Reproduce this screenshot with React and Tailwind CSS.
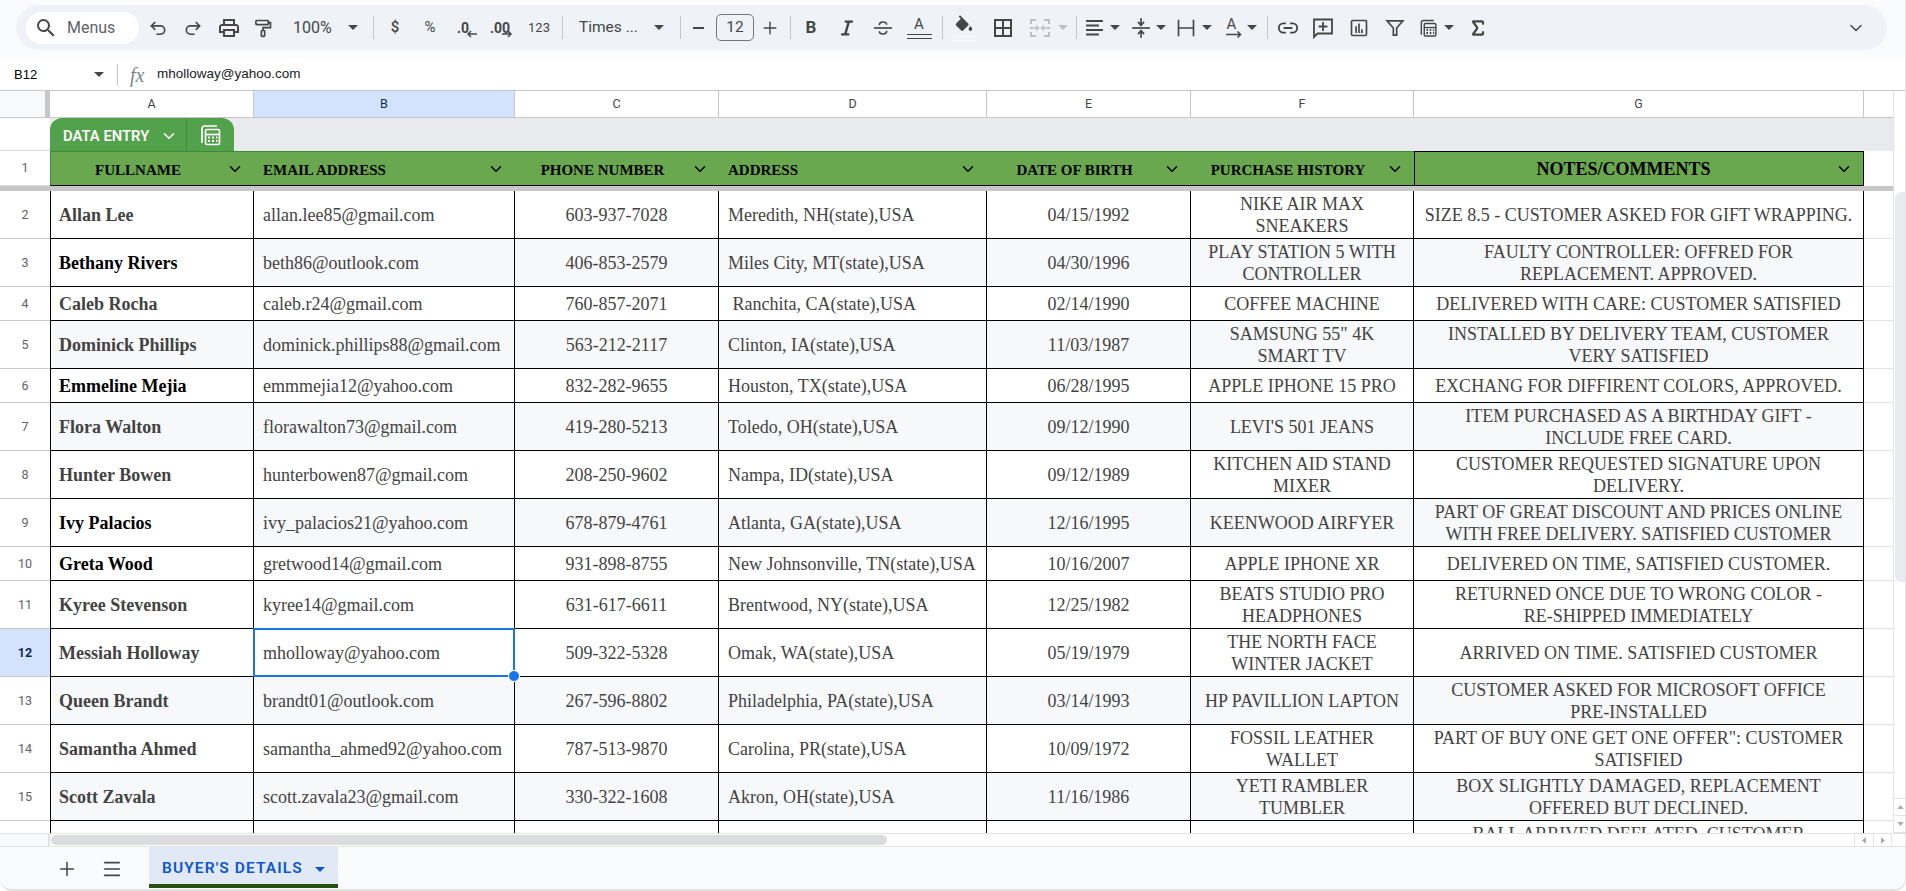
import React from "react";
import { Link2, Sigma, ChevronDown, Plus, Menu } from "lucide-react";

const D = "#444746";
const rows = [
  { n: 2, tall: 1, name: "Allan Lee", email: "allan.lee85@gmail.com", phone: "603-937-7028", addr: "Meredith, NH(state),USA", dob: "04/15/1992", item: "NIKE AIR MAX\nSNEAKERS", note: "SIZE 8.5 - CUSTOMER ASKED FOR GIFT WRAPPING." },
  { n: 3, tall: 1, dark: 1, shade: 1, whiteA: 1, name: "Bethany Rivers", email: "beth86@outlook.com", phone: "406-853-2579", addr: "Miles City, MT(state),USA", dob: "04/30/1996", item: "PLAY STATION 5 WITH\nCONTROLLER", note: "FAULTY CONTROLLER: OFFRED FOR\nREPLACEMENT. APPROVED." },
  { n: 4, name: "Caleb Rocha", email: "caleb.r24@gmail.com", phone: "760-857-2071", addr: " Ranchita, CA(state),USA", dob: "02/14/1990", item: "COFFEE MACHINE", note: "DELIVERED WITH CARE: CUSTOMER SATISFIED" },
  { n: 5, tall: 1, shade: 1, name: "Dominick Phillips", email: "dominick.phillips88@gmail.com", phone: "563-212-2117", addr: "Clinton, IA(state),USA", dob: "11/03/1987", item: "SAMSUNG 55\" 4K\nSMART TV", note: "INSTALLED BY DELIVERY TEAM, CUSTOMER\nVERY SATISFIED" },
  { n: 6, dark: 1, name: "Emmeline Mejia", email: "emmmejia12@yahoo.com", phone: "832-282-9655", addr: "Houston, TX(state),USA", dob: "06/28/1995", item: "APPLE IPHONE 15 PRO", note: "EXCHANG FOR DIFFIRENT COLORS, APPROVED." },
  { n: 7, tall: 1, shade: 1, name: "Flora Walton", email: "florawalton73@gmail.com", phone: "419-280-5213", addr: "Toledo, OH(state),USA", dob: "09/12/1990", item: "LEVI'S 501 JEANS", note: "ITEM PURCHASED AS A BIRTHDAY GIFT -\nINCLUDE FREE CARD." },
  { n: 8, tall: 1, name: "Hunter Bowen", email: "hunterbowen87@gmail.com", phone: "208-250-9602", addr: "Nampa, ID(state),USA", dob: "09/12/1989", item: "KITCHEN AID STAND\nMIXER", note: "CUSTOMER REQUESTED SIGNATURE UPON\nDELIVERY." },
  { n: 9, tall: 1, dark: 1, shade: 1, whiteA: 1, name: "Ivy Palacios", email: "ivy_palacios21@yahoo.com", phone: "678-879-4761", addr: "Atlanta, GA(state),USA", dob: "12/16/1995", item: "KEENWOOD AIRFYER", note: "PART OF GREAT DISCOUNT AND PRICES ONLINE\nWITH FREE DELIVERY. SATISFIED CUSTOMER" },
  { n: 10, dark: 1, name: "Greta Wood", email: "gretwood14@gmail.com", phone: "931-898-8755", addr: "New Johnsonville, TN(state),USA", dob: "10/16/2007", item: "APPLE IPHONE XR", note: "DELIVERED ON TIME, SATISFIED CUSTOMER." },
  { n: 11, tall: 1, name: "Kyree Stevenson", email: "kyree14@gmail.com", phone: "631-617-6611", addr: "Brentwood, NY(state),USA", dob: "12/25/1982", item: "BEATS STUDIO PRO\nHEADPHONES", note: "RETURNED ONCE DUE TO WRONG COLOR -\nRE-SHIPPED IMMEDIATELY" },
  { n: 12, tall: 1, sel: 1, name: "Messiah Holloway", email: "mholloway@yahoo.com", phone: "509-322-5328", addr: "Omak, WA(state),USA", dob: "05/19/1979", item: "THE NORTH FACE\nWINTER JACKET", note: "ARRIVED ON TIME. SATISFIED CUSTOMER" },
  { n: 13, tall: 1, shade: 1, name: "Queen Brandt", email: "brandt01@outlook.com", phone: "267-596-8802", addr: "Philadelphia, PA(state),USA", dob: "03/14/1993", item: "HP PAVILLION LAPTON", note: "CUSTOMER ASKED FOR MICROSOFT OFFICE\nPRE-INSTALLED" },
  { n: 14, tall: 1, name: "Samantha Ahmed", email: "samantha_ahmed92@yahoo.com", phone: "787-513-9870", addr: "Carolina, PR(state),USA", dob: "10/09/1972", item: "FOSSIL LEATHER\nWALLET", note: "PART OF BUY ONE GET ONE OFFER\": CUSTOMER\nSATISFIED" },
  { n: 15, tall: 1, shade: 1, name: "Scott Zavala", email: "scott.zavala23@gmail.com", phone: "330-322-1608", addr: "Akron, OH(state),USA", dob: "11/16/1986", item: "YETI RAMBLER\nTUMBLER", note: "BOX SLIGHTLY DAMAGED, REPLACEMENT\nOFFERED BUT DECLINED." },
  { n: 16, tall: 1, blankRow: 1, name: "", email: "", phone: "", addr: "", dob: "", item: "", note: "BALL ARRIVED DEFLATED, CUSTOMER\nREFUNDED" },
];

const Svg = ({ children, cls = "w-[24px] h-[24px]", color = D }) => (
  <svg viewBox="0 0 24 24" className={cls} fill="none" stroke={color} strokeWidth="2" strokeLinecap="square">{children}</svg>
);
const Caret = ({ color = D }) => (
  <svg viewBox="0 0 10 5" className="w-[10px] h-[5px]"><path d="M0 0h10L5 5z" fill={color} /></svg>
);
const Sep = ({ cls }) => (
  <div className={`flex h-full items-center justify-center ${cls}`}><div className="h-[23px] w-px bg-[#c7c7c7]" /></div>
);
const T = ({ cls, children }) => <div className={`flex h-full shrink-0 items-center justify-center ${cls}`}>{children}</div>;

const Calc = ({ color = D, cls = "h-[24px] w-[24px]" }) => (
  <svg viewBox="0 0 24 24" className={cls} fill="none" stroke={color} strokeWidth="1.7">
    <path d="M4 20V5.5A2.5 2.5 0 0 1 6.500 3H19" />
    <rect x="7.500" y="6.500" width="14" height="15" rx="1.500" />
    <path d="M7.500 11.500h14" />
    <path d="M10 14.500h2M14 14.500h2M18 14.500h1.500M10 18h2M14 18h2M18 18h1.500" strokeWidth="2.200" />
  </svg>
);

function Toolbar() {
  return (
    <div className="h-[59px] shrink-0 bg-[#f9fbfd] pt-[5px]">
      <div className="mx-[18px] ml-[16px] flex h-[45px] items-center rounded-[23px] bg-[#eff3f8] pl-[10px] text-[#444746] font-['Roboto',sans-serif]">
        <div className="flex h-[32px] w-[113px] shrink-0 items-center rounded-[16px] bg-white pl-[8px]">
          <svg viewBox="0 0 24 24" className="h-[24px] w-[24px]" fill={D}><path d="M15.500 14h-.79l-.28-.27A6.470 6.470 0 0 0 16 9.500 6.500 6.500 0 1 0 9.500 16c1.610 0 3.090-.59 4.230-1.570l.27.28v.79l5 4.990L20.490 19l-4.990-5zm-6 0C7.010 14 5 11.990 5 9.500S7.010 5 9.500 5 14 7.010 14 9.500 11.990 14 9.500 14z" /></svg>
          <span className="ml-[9px] text-[16px] text-[#5f6368]">Menus</span>
        </div>
        <T cls="w-[38px]">
          <Svg cls="h-[20px] w-[20px]"><path d="M8 13.500 4 9.500l4-4" strokeWidth="2" /><path d="M4.500 9.500H15a5 5 0 0 1 0 10h-4" strokeWidth="2" /></Svg>
        </T>
        <T cls="w-[32px]">
          <Svg cls="h-[20px] w-[20px]"><path d="M16 13.500l4-4-4-4" strokeWidth="2" /><path d="M19.500 9.500H9a5 5 0 0 0 0 10h4" strokeWidth="2" /></Svg>
        </T>
        <T cls="w-[40px]">
          <svg viewBox="0 0 24 24" className="h-[24px] w-[24px]" fill={D}><path d="M19 8h-1V3H6v5H5c-1.660 0-3 1.340-3 3v6h4v4h12v-4h4v-6c0-1.660-1.340-3-3-3zM8 5h8v3H8V5zm8 12v2H8v-4h8v2zm2-2v-2H6v2H4v-4c0-.55.45-1 1-1h14c.55 0 1 .45 1 1v4h-2z" /></svg>
        </T>
        <T cls="w-[28px]">
          <Svg cls="h-[22px] w-[20px]">
            <rect x="3.500" y="3" width="15" height="5" rx="1" />
            <path d="M18.500 5.500h2.500v6h-9v3" />
            <rect x="10" y="15" width="4" height="7" rx="1" />
          </Svg>
        </T>
        <div className="flex h-full w-[88px] shrink-0 items-center pl-[16px]">
          <span className="w-[55px] text-[16px]">100%</span><Caret />
        </div>
        <Sep cls="w-[16px]" />
        <T cls="w-[28px] text-[15px] font-medium">$</T>
        <T cls="w-[42px] text-[15px]">%</T>
        <T cls="w-[32px]">
          <div className="relative h-[24px] w-[20px]">
            <span className="text-[14px] font-bold leading-[18px]">.0</span>
            <svg viewBox="0 0 10 8" className="absolute bottom-[2px] right-0 h-[8px] w-[10px]" fill="none" stroke={D} strokeWidth="1.500"><path d="M10 4H1M4 1 1 4l3 3" /></svg>
          </div>
        </T>
        <T cls="w-[38px]">
          <div className="relative h-[24px] w-[24px]">
            <span className="text-[14px] font-bold leading-[18px]">.00</span>
            <svg viewBox="0 0 10 8" className="absolute bottom-[2px] right-[2px] h-[8px] w-[10px]" fill="none" stroke={D} strokeWidth="1.500"><path d="M0 4h9M6 1l3 3-3 3" /></svg>
          </div>
        </T>
        <T cls="w-[36px] text-[13px]">123</T>
        <Sep cls="w-[10px]" />
        <div className="flex h-full w-[105px] shrink-0 items-center pl-[12px]">
          <span className="w-[75px] text-[15.500px]">Times ...</span><Caret />
        </div>
        <Sep cls="w-[16px]" />
        <T cls="w-[20px]"><div className="h-[2px] w-[11px] bg-[#444746]" /></T>
        <div className="ml-[8px] flex h-[27px] w-[38px] shrink-0 items-center justify-center rounded-[5px] border border-[#747775] text-[15.500px]">12</div>
        <T cls="w-[32px]"><Plus size={20} color={D} strokeWidth={1.700} /></T>
        <Sep cls="w-[8px]" />
        <T cls="w-[34px] text-[17px] font-bold">B</T>
        <T cls="w-[38px]">
          <Svg cls="h-[22px] w-[22px]"><path d="M9.500 5h9M5.500 19h9M14 5l-4 14" strokeWidth="2.600" strokeLinecap="butt" /></Svg>
        </T>
        <T cls="w-[34px]">
          <Svg cls="h-[22px] w-[22px]"><path d="M3 12h18" strokeWidth="1.800" /><path d="M8 9c0-2 1.700-3.500 4-3.500s4 1.300 4 3M16 15c0 2-1.700 3.500-4 3.500s-4-1.300-4-3" strokeWidth="1.800" strokeLinecap="butt" /></Svg>
        </T>
        <T cls="w-[38px]">
          <div className="flex flex-col items-center">
            <span className="text-[15px] leading-[15px]">A</span>
            <div className="mt-[2px] h-[5px] w-[25px] border-y border-[#444746]" />
          </div>
        </T>
        <Sep cls="w-[8px]" />
        <T cls="w-[36px]">
          <div className="flex flex-col items-center">
            <svg viewBox="0 0 24 20" className="h-[19px] w-[22px]" fill={D}><path d="M16.560 8.940 7.620 0 6.210 1.410l2.380 2.380-5.150 5.150c-.59.59-.59 1.540 0 2.120l5.500 5.500c.29.29.68.44 1.060.44s.77-.15 1.060-.44l5.500-5.500c.59-.58.59-1.530 0-2.120zM19 11.500s-2 2.170-2 3.500c0 1.100.9 2 2 2s2-.9 2-2c0-1.330-2-3.500-2-3.500z" /></svg>
            <div className="mt-[2px] h-[5px] w-[26px] border-y border-white" />
          </div>
        </T>
        <T cls="w-[42px]">
          <Svg><rect x="4" y="4" width="16" height="16" /><path d="M12 4v16M4 12h16" /></Svg>
        </T>
        <T cls="w-[32px]">
          <svg viewBox="0 0 24 24" className="h-[24px] w-[24px]" fill="none" stroke="#bdc1c6" strokeWidth="2">
            <path d="M8 4H3v4M3 16v4h5M16 4h5v4M21 16v4h-5M3 11v2M21 11v2" />
            <path d="M4 12h6M8 9.500l2.500 2.500L8 14.500M20 12h-6M16 9.500 13.500 12l2.500 2.500" strokeWidth="1.500" />
          </svg>
        </T>
        <T cls="w-[14px]"><Caret color="#bdc1c6" /></T>
        <Sep cls="w-[12px]" />
        <T cls="w-[26px]">
          <Svg><path d="M4 5h15M4 9.500h11M4 14h15M4 18.500h11" strokeWidth="1.800" /></Svg>
        </T>
        <T cls="w-[14px]"><Caret /></T>
        <T cls="ml-[6px] w-[26px]">
          <Svg><path d="M4 12h16" strokeWidth="1.700" /><path d="M12 3v6M9.500 6.500 12 9.500l2.500-3M12 21v-6M9.500 17.500 12 14.500l2.500 3" strokeWidth="1.700" /></Svg>
        </T>
        <T cls="w-[14px]"><Caret /></T>
        <T cls="ml-[5px] w-[26px]">
          <Svg cls="h-[20px] w-[20px]"><path d="M3 3v18M21 3v18M3 12h18" strokeWidth="2" /></Svg>
        </T>
        <T cls="ml-[1px] w-[14px]"><Caret /></T>
        <T cls="ml-[6px] w-[26px]">
          <div className="flex flex-col items-start">
            <span className="ml-[2px] text-[15px] leading-[14px]">A</span>
            <svg viewBox="0 0 17 7" className="h-[7px] w-[17px]" fill="none" stroke={D} strokeWidth="1.500"><path d="M1 3.500h14M12.500 .5l3 3-3 3" /></svg>
          </div>
        </T>
        <T cls="w-[12px]"><Caret /></T>
        <Sep cls="w-[18px]" />
        <T cls="w-[24px]"><Link2 size={22} color={D} strokeWidth={2} /></T>
        <T cls="w-[46px]">
          <Svg><path d="M3 21V3.500h18V17.500H6.500z" strokeWidth="1.800" strokeLinejoin="miter" /><path d="M12 7v7M8.500 10.500h7" strokeWidth="1.800" /></Svg>
        </T>
        <T cls="w-[26px]">
          <Svg cls="h-[20px] w-[20px]"><rect x="3" y="3" width="18" height="18" rx="1.500" strokeWidth="2" /><path d="M8.500 11v6M12 7.500V17M15.500 14.500V17" strokeWidth="2" /></Svg>
        </T>
        <T cls="w-[46px]">
          <Svg cls="h-[20px] w-[20px]"><path d="M2.500 3.500h19L14 12v8.500h-4V12z" strokeWidth="2" /></Svg>
        </T>
        <T cls="w-[20px]"><Calc /></T>
        <T cls="ml-[4px] w-[14px]"><Caret /></T>
        <T cls="w-[44px]"><Sigma size={20} color={D} strokeWidth={2.600} /></T>
        <div className="ml-auto mr-[21px] flex h-full w-[20px] items-center justify-center"><ChevronDown size={22} color={D} strokeWidth={1.800} /></div>
      </div>
    </div>
  );
}

function FormulaBar() {
  return (
    <div className="flex h-[32px] shrink-0 items-center border-b border-[#c7c7c7] bg-white font-['Liberation_Sans',sans-serif] text-black">
      <span className="ml-[14px] w-[80px] text-[13px]">B12</span>
      <Caret />
      <div className="ml-[13px] h-[21px] w-px bg-[#c7c7c7]" />
      <span className="ml-[12px] w-[27px] text-[20px] italic text-[#80868b] font-['Liberation_Serif',serif]">fx</span>
      <span className="text-[13.500px] text-[#202124]">mholloway@yahoo.com</span>
    </div>
  );
}

const ColH = ({ cls, children }) => (
  <div className={`flex items-center justify-center border-b border-r border-[#c7c7c7] ${cls}`}>{children}</div>
);

function ColumnHeaders() {
  return (
    <div className="grid h-[27px] shrink-0 grid-cols-[45px_5px_204px_261px_204px_268px_204px_223px_450px_29px] bg-white font-['Roboto',sans-serif] text-[12.500px] text-[#444746]">
      <div className="border-b border-[#c7c7c7] bg-[#f8f9fa]" />
      <div className="bg-[#c7c7c7]" />
      <ColH>A</ColH>
      <ColH cls="bg-[#d3e3fd] text-[#0b2a5c]">B</ColH>
      <ColH>C</ColH>
      <ColH>D</ColH>
      <ColH>E</ColH>
      <ColH>F</ColH>
      <ColH>G</ColH>
      <div className="border-b border-[#c7c7c7]" />
    </div>
  );
}

function FilterBar() {
  return (
    <div className="flex h-[33px] shrink-0 bg-[#e8eaed]">
      <div className="w-[50px] border-b border-[#d9d9d9] bg-white" />
      <div className="flex h-full w-[184px] rounded-t-[12px] bg-[#52a24b] pt-[1px] text-white">
        <div className="flex w-[137px] items-center border-r border-[#3f8a3a] pl-[13px]">
          <span className="whitespace-nowrap pt-[2px] text-[14.800px] font-semibold font-['Roboto',sans-serif]">DATA ENTRY</span>
          <div className="ml-[11px] pt-[2px]"><ChevronDown size={18} color="#fff" strokeWidth={2} /></div>
        </div>
        <div className="flex flex-1 items-center justify-center pr-[2px]"><Calc color="#fff" /></div>
      </div>
    </div>
  );
}

const Head = ({ label, left, big, cls }) => (
  <div className={`flex items-center bg-[#6aa84f] font-['Liberation_Serif',serif] font-bold text-black ${cls}`}>
    <span className={`flex-1 ${left ? "pl-[9px] text-left" : "text-center"} ${big ? "pt-[1px] pr-[2px] text-[18px]" : "pt-[3px] text-[15px]"}`}>{label}</span>
    <div className="mr-[9px] flex w-[20px] justify-center"><ChevronDown size={18} color="#000" strokeWidth={2} /></div>
  </div>
);

function HeaderRow() {
  const base = "border-b border-t border-b-black border-t-[#3f8a3a]";
  return (
    <div className="grid h-[35px] shrink-0 grid-cols-[50px_204px_261px_204px_268px_204px_223px_450px_29px] bg-white">
      <div className="flex items-center justify-center border-b border-[#d9d9d9] font-['Roboto',sans-serif] text-[12.500px] text-[#5f6368]">1</div>
      <Head label="FULLNAME" cls={`${base} border-l border-l-[#3f8a3a]`} />
      <Head label="EMAIL ADDRESS" left cls={base} />
      <Head label="PHONE NUMBER" cls={base} />
      <Head label="ADDRESS" left cls={base} />
      <Head label="DATE OF BIRTH" cls={base} />
      <Head label="PURCHASE HISTORY" cls={base} />
      <Head label="NOTES/COMMENTS" big cls="border border-black" />
      <div />
    </div>
  );
}

const Cell = ({ children, bg, cls = "" }) => (
  <div className={`flex items-center whitespace-pre border-b border-r border-black ${bg ? "bg-[#f7f8fa]" : "bg-white"} ${cls}`}>{children}</div>
);

function DataRow({ r }) {
  const h = r.tall ? "h-[48px]" : "h-[34px]";
  const center = "justify-center text-center";
  const left = "pl-[9px]";
  return (
    <div className={`grid shrink-0 grid-cols-[50px_204px_261px_204px_268px_204px_223px_450px_29px] font-['Liberation_Serif',serif] text-[18px] leading-[22px] text-[#434343] ${h}`}>
      <div className={`flex items-center justify-center border-b border-[#c7c7c7] font-['Roboto',sans-serif] text-[12.500px] ${r.sel ? "bg-[#d3e3fd] font-bold text-[#0b2a5c]" : "bg-white text-[#5f6368]"}`}>{r.blankRow ? "" : r.n}</div>
      <Cell bg={r.shade && !r.whiteA} cls={`border-l pl-[8px] font-bold ${r.dark ? "text-black" : ""}`}>{r.name}</Cell>
      <Cell bg={r.shade} cls={`${left} relative`}>
        {r.email}
        {r.sel ? (
          <div className="absolute -bottom-px -left-px -right-px -top-px z-10 border-2 border-[#1a73e8]">
            <div className="absolute -bottom-[7px] -right-[7px] h-[12px] w-[12px] rounded-full border border-white bg-[#1a73e8]" />
          </div>
        ) : null}
      </Cell>
      <Cell bg={r.shade} cls={center}>{r.phone}</Cell>
      <Cell bg={r.shade} cls={left}>{r.addr}</Cell>
      <Cell bg={r.shade} cls={center}>{r.dob}</Cell>
      <Cell bg={r.shade} cls={center}>{r.item}</Cell>
      <Cell bg={r.shade} cls={center}>{r.note}</Cell>
      <div className="border-b border-[#e3e3e3] bg-white" />
    </div>
  );
}

function VScroll() {
  return (
    <div className="flex w-[13px] shrink-0 flex-col border-l border-[#e3e3e3] bg-white">
      <div className="h-[101px] shrink-0" />
      <div className="ml-[1px] h-[390px] shrink-0 rounded-l-[6px] bg-[#e8eaed]" />
      <div className="flex-1" />
      <div className="flex h-[17px] shrink-0 items-center justify-center border-t border-[#e3e3e3] text-[#9aa0a6]">
        <svg viewBox="0 0 8 5" className="h-[4px] w-[7px]"><path d="M0 5h8L4 0z" fill="#a9adb1" /></svg>
      </div>
      <div className="flex h-[18px] shrink-0 items-center justify-center border-y border-[#e3e3e3]">
        <svg viewBox="0 0 8 5" className="h-[4px] w-[7px]"><path d="M0 0h8L4 5z" fill="#a9adb1" /></svg>
      </div>
    </div>
  );
}

function HScroll() {
  return (
    <div className="flex h-[14px] shrink-0 border-y border-[#e3e3e3] bg-white">
      <div className="w-[50px] border-r-2 border-[#e3e3e3] bg-[#f8f9fa]" />
      <div className="ml-[1px] mt-[1px] h-[10px] w-[836px] rounded-[5px] bg-[#dadce0]" />
      <div className="ml-auto flex">
        <div className="flex w-[19px] items-center justify-center border-l border-[#e3e3e3]">
          <svg viewBox="0 0 5 8" className="h-[7px] w-[4px]"><path d="M5 0v8L0 4z" fill="#a9adb1" /></svg>
        </div>
        <div className="flex w-[19px] items-center justify-center border-x border-[#e3e3e3]">
          <svg viewBox="0 0 5 8" className="h-[7px] w-[4px]"><path d="M0 0v8l5-4z" fill="#a9adb1" /></svg>
        </div>
        <div className="w-[13px]" />
      </div>
    </div>
  );
}

function TabBar() {
  return (
    <div className="flex h-[42px] shrink-0 items-stretch bg-[#f9fbfd] font-['Roboto',sans-serif]">
      <div className="flex w-[149px] items-center pl-[56px] pt-[1px]">
        <Plus size={22} color={D} strokeWidth={1.700} />
        <div className="ml-[23px]"><Menu size={22} color={D} strokeWidth={1.800} /></div>
      </div>
      <div className="flex h-[41px] w-[189px] items-center border-b-4 border-[#274e13] bg-[#e1e9f7] pl-[13px] pt-[7px]">
        <span className="w-[153px] whitespace-nowrap text-[15.500px] font-semibold tracking-[1.100px] text-[#0b57d0]">BUYER'S DETAILS</span>
        <Caret color="#0b57d0" />
      </div>
    </div>
  );
}

export default function App() {
  return (
    <div className="flex h-[891px] w-[1906px] flex-col overflow-hidden rounded-b-[12px] border-b-2 border-r border-[#e3e3e3] bg-white">
      <Toolbar />
      <FormulaBar />
      <div className="flex h-[742px] shrink-0 overflow-hidden">
        <div className="flex w-[1893px] shrink-0 flex-col overflow-hidden">
          <ColumnHeaders />
          <FilterBar />
          <HeaderRow />
          <div className="h-[5px] shrink-0 bg-[#c7c7c7]" />
          <div className="flex min-h-0 flex-1 flex-col overflow-hidden">
            {rows.map((r) => <DataRow key={r.n} r={r} />)}
          </div>
        </div>
        <VScroll />
      </div>
      <HScroll />
      <TabBar />
    </div>
  );
}
